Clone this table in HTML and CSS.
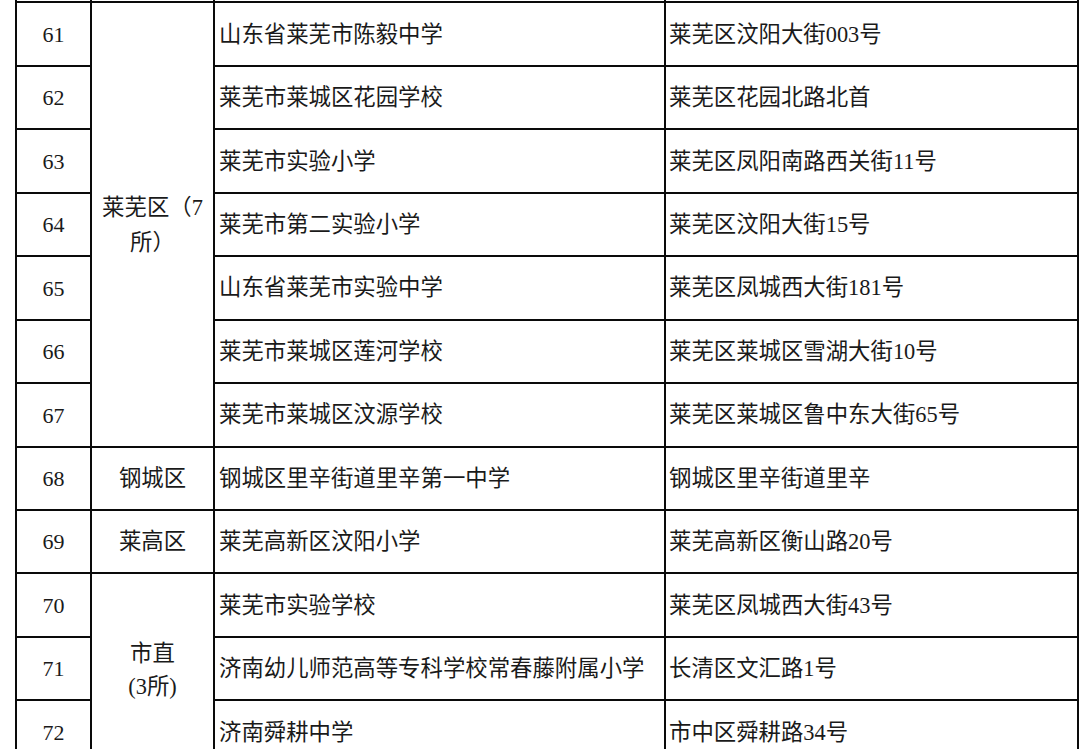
FILE: index.html
```html
<!DOCTYPE html>
<html>
<head>
<meta charset="utf-8">
<title>学校名单</title>
<link rel="stylesheet" href="styles.css">
</head>
<body>
<table class="sheet">
  <colgroup>
    <col class="c-no">
    <col class="c-area">
    <col class="c-name">
    <col class="c-addr">
  </colgroup>
  <tbody>
    <tr class="row-prev">
      <td class="no"></td><td class="area"></td><td class="name"></td><td class="addr"></td>
    </tr>
    <tr>
      <td class="no">61</td>
      <td class="area" rowspan="7"><span class="area-text">莱芜区（7<br>所）</span></td>
      <td class="name">山东省莱芜市陈毅中学</td>
      <td class="addr">莱芜区汶阳大街003号</td>
    </tr>
    <tr>
      <td class="no">62</td>
      <td class="name">莱芜市莱城区花园学校</td>
      <td class="addr">莱芜区花园北路北首</td>
    </tr>
    <tr>
      <td class="no">63</td>
      <td class="name">莱芜市实验小学</td>
      <td class="addr">莱芜区凤阳南路西关街11号</td>
    </tr>
    <tr>
      <td class="no">64</td>
      <td class="name">莱芜市第二实验小学</td>
      <td class="addr">莱芜区汶阳大街15号</td>
    </tr>
    <tr>
      <td class="no">65</td>
      <td class="name">山东省莱芜市实验中学</td>
      <td class="addr">莱芜区凤城西大街181号</td>
    </tr>
    <tr>
      <td class="no">66</td>
      <td class="name">莱芜市莱城区莲河学校</td>
      <td class="addr">莱芜区莱城区雪湖大街10号</td>
    </tr>
    <tr>
      <td class="no">67</td>
      <td class="name">莱芜市莱城区汶源学校</td>
      <td class="addr">莱芜区莱城区鲁中东大街65号</td>
    </tr>
    <tr>
      <td class="no">68</td>
      <td class="area">钢城区</td>
      <td class="name">钢城区里辛街道里辛第一中学</td>
      <td class="addr">钢城区里辛街道里辛</td>
    </tr>
    <tr>
      <td class="no">69</td>
      <td class="area">莱高区</td>
      <td class="name">莱芜高新区汶阳小学</td>
      <td class="addr">莱芜高新区衡山路20号</td>
    </tr>
    <tr>
      <td class="no">70</td>
      <td class="area" rowspan="3"><span class="area-text narrow">市直<br>(3所)</span></td>
      <td class="name">莱芜市实验学校</td>
      <td class="addr">莱芜区凤城西大街43号</td>
    </tr>
    <tr>
      <td class="no">71</td>
      <td class="name">济南幼儿师范高等专科学校常春藤附属小学</td>
      <td class="addr">长清区文汇路1号</td>
    </tr>
    <tr>
      <td class="no">72</td>
      <td class="name">济南舜耕中学</td>
      <td class="addr">市中区舜耕路34号</td>
    </tr>
  </tbody>
</table>
</body>
</html>
```

FILE: styles.css
```css
html, body {
  margin: 0;
  padding: 0;
  background: #ffffff;
}

body {
  font-family: "Liberation Serif", "Noto Sans CJK SC", serif;
  color: #1a1a1a;
  overflow: hidden;
}

.sheet {
  border-collapse: collapse;
  table-layout: fixed;
  width: 1062px;
  margin: -62px 0 0 15px;
}

.c-no { width: 75px; }
.c-area { width: 123px; }
.c-name { width: 451px; }
.c-addr { width: 413px; }

.sheet tr {
  height: 63.45px;
}

.sheet td {
  border: 2px solid #0a0a0a;
  padding: 2px 0 0 0;
  font-family: "Liberation Serif", "Noto Sans CJK SC", serif;
  font-size: 22.4px;
  line-height: 1.2;
  white-space: nowrap;
  vertical-align: middle;
}

.sheet td.no {
  text-align: center;
  font-size: 22px;
}

.sheet td.area {
  text-align: center;
}

.area-text {
  display: inline-block;
  line-height: 35px;
}

.area-text.narrow {
  line-height: 33px;
}

.sheet td.name {
  padding-left: 4px;
}

.sheet td.addr {
  padding-left: 3px;
}
```
